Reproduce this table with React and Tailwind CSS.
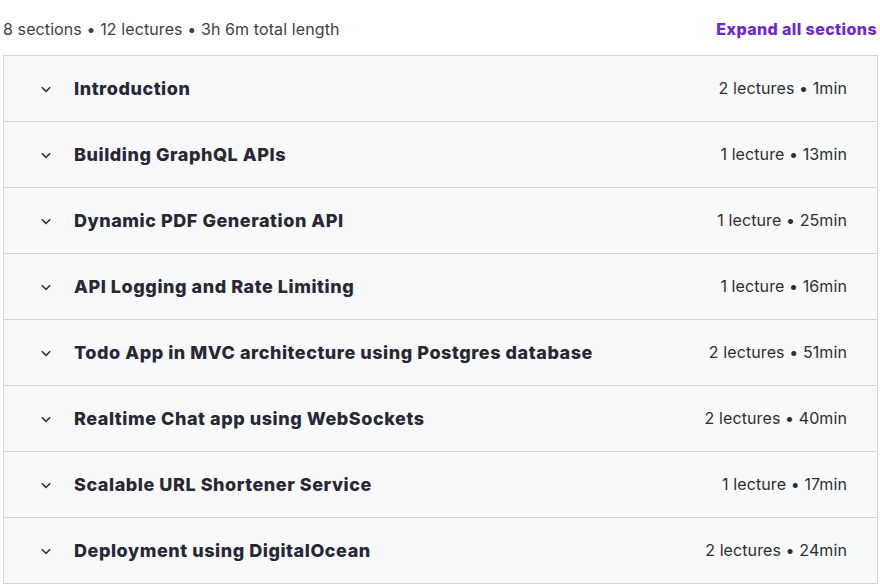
import React from 'react';

const sections = [
  { title: 'Introduction', meta: '2 lectures • 1min' },
  { title: 'Building GraphQL APIs', meta: '1 lecture • 13min' },
  { title: 'Dynamic PDF Generation API', meta: '1 lecture • 25min' },
  { title: 'API Logging and Rate Limiting', meta: '1 lecture • 16min' },
  { title: 'Todo App in MVC architecture using Postgres database', meta: '2 lectures • 51min' },
  { title: 'Realtime Chat app using WebSockets', meta: '2 lectures • 40min' },
  { title: 'Scalable URL Shortener Service', meta: '1 lecture • 17min' },
  { title: 'Deployment using DigitalOcean', meta: '2 lectures • 24min' },
];

function Chevron() {
  return (
    <svg width="12" height="12" viewBox="0 0 12 12" fill="none" className="text-[#2d2f31]">
      <path d="M1.8 4.2l4.2 4.2 4.2-4.2" stroke="currentColor" strokeWidth="1.5" />
    </svg>
  );
}

export default function App() {
  return (
    <div className="w-[880px] h-[587px] bg-white text-[#2d2f31] font-['Inter','Liberation_Sans',sans-serif]">
      <div className="flex items-end justify-between pl-[3px] pr-[3px] h-[55px] pb-[14px]">
        <span className="text-[16px] tracking-[0.1px] text-[#3e4143]">8 sections • 12 lectures • 3h 6m total length</span>
        <button className="text-[16px] font-extrabold text-[#6d28d2] tracking-[0.4px]">Expand all sections</button>
      </div>
      <div className="ml-[3px] w-[875px] border border-[#d1d7dc] bg-[#f7f9fa]">
        {sections.map((s, i) => (
          <div
            key={s.title}
            className={`flex items-center pl-[36px] pr-[30px] ${i < sections.length - 1 ? 'h-[66px] border-b border-[#d1d7dc]' : 'h-[65px]'}`}
          >
            <Chevron />
            <span className="ml-[22px] text-[18px] font-extrabold tracking-[0.55px] text-[#272834] -mt-[1px]">{s.title}</span>
            <span className="ml-auto text-[16px] tracking-[0.1px] text-[#2d2f31] -mt-[1px]">{s.meta}</span>
          </div>
        ))}
      </div>
    </div>
  );
}
